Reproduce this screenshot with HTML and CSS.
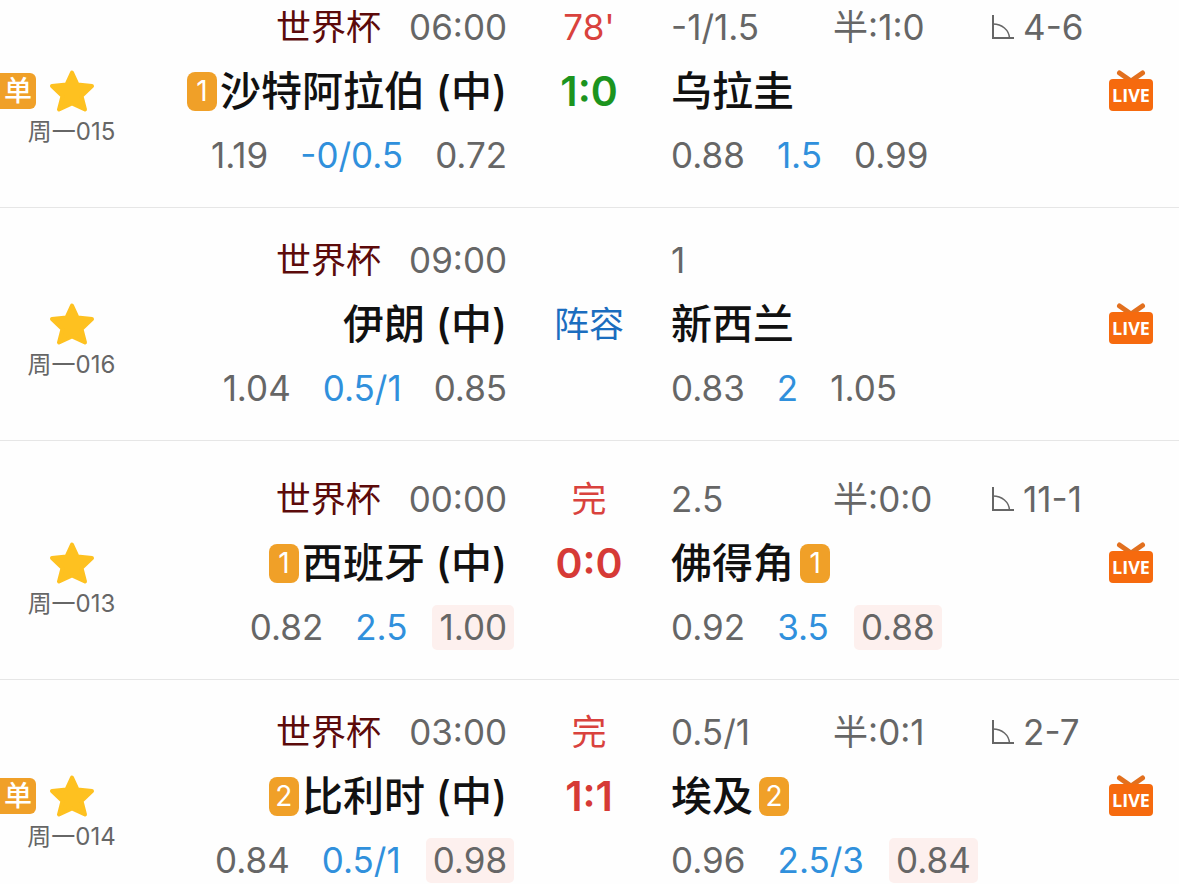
FILE: index.html
```html
<!DOCTYPE html>
<html lang="zh-CN">

<head>
  <meta charset="UTF-8">
  <meta name="viewport" content="width=device-width, initial-scale=1.0">
  <title>世界杯比分</title>
  <link rel="stylesheet" href="styles.css">
</head>

<body>
  <!-- 公用图标 -->
  <svg class="sprite" aria-hidden="true">
    <symbol id="star" viewBox="0 0 46 44">
      <path d="M23 3.500 L28.500 15.500 L43 17 L32.500 27 L36 40.500 L23 34.500 L10 40.500 L13.500 27 L3 17 L17.500 15.500 Z" fill="#fec120" stroke="#fec120" stroke-width="4" stroke-linejoin="round" />
    </symbol>
    <symbol id="corner" viewBox="0 0 24 26">
      <path d="M2 1 V24 H23" fill="none" stroke="#666" stroke-width="2" />
      <path d="M2 10 C11 10 18 16 18.500 24" fill="none" stroke="#666" stroke-width="1.500" />
    </symbol>
    <symbol id="live" viewBox="0 0 46 42">
      <path d="M11.500 3 L23 11 L34.500 3" fill="none" stroke="#e2701f" stroke-width="5" stroke-linecap="round" />
      <rect x="1" y="9" width="44" height="32" rx="4" fill="#f66a0e" />
      <text x="23" y="32" text-anchor="middle" class="live-text">LIVE</text>
    </symbol>
  </svg>

  <main class="list">
    <!-- 沙特阿拉伯 vs 乌拉圭 -->
    <article class="match">
      <div class="mark">
        <div class="mark-line">
          <span class="single">单</span>
          <button class="star" type="button" aria-label="取消关注"><svg><use href="#star" /></svg></button>
        </div>
        <span class="no">周一015</span>
      </div>
      <div class="home">
        <div class="line info"><span class="league">世界杯</span><time>06:00</time></div>
        <div class="line team"><span class="rank">1</span><span class="name">沙特阿拉伯 (中)</span></div>
        <div class="line odds"><span>1.19</span><span class="handicap">-0/0.5</span><span>0.72</span></div>
      </div>
      <div class="state">
        <div class="line minute">78'</div>
        <div class="line score playing">1:0</div>
      </div>
      <div class="away">
        <div class="line detail"><span>-1/1.5</span><span>半:1:0</span><span class="corner"><svg><use href="#corner" /></svg>4-6</span></div>
        <div class="line team"><span class="name">乌拉圭</span></div>
        <div class="line odds"><span>0.88</span><span class="handicap">1.5</span><span>0.99</span></div>
      </div>
      <a class="live" href="#" aria-label="直播"><svg><use href="#live" /></svg></a>
    </article>

    <!-- 伊朗 vs 新西兰 -->
    <article class="match">
      <div class="mark">
        <div class="mark-line">
          <button class="star" type="button" aria-label="取消关注"><svg><use href="#star" /></svg></button>
        </div>
        <span class="no">周一016</span>
      </div>
      <div class="home">
        <div class="line info"><span class="league">世界杯</span><time>09:00</time></div>
        <div class="line team"><span class="name">伊朗 (中)</span></div>
        <div class="line odds"><span>1.04</span><span class="handicap">0.5/1</span><span>0.85</span></div>
      </div>
      <div class="state">
        <div class="line"></div>
        <div class="line"><a class="lineup" href="#">阵容</a></div>
      </div>
      <div class="away">
        <div class="line detail"><span>1</span></div>
        <div class="line team"><span class="name">新西兰</span></div>
        <div class="line odds"><span>0.83</span><span class="handicap">2</span><span>1.05</span></div>
      </div>
      <a class="live" href="#" aria-label="直播"><svg><use href="#live" /></svg></a>
    </article>

    <!-- 西班牙 vs 佛得角 -->
    <article class="match finished">
      <div class="mark">
        <div class="mark-line">
          <button class="star" type="button" aria-label="取消关注"><svg><use href="#star" /></svg></button>
        </div>
        <span class="no">周一013</span>
      </div>
      <div class="home">
        <div class="line info"><span class="league">世界杯</span><time>00:00</time></div>
        <div class="line team"><span class="rank">1</span><span class="name">西班牙 (中)</span></div>
        <div class="line odds"><span>0.82</span><span class="handicap">2.5</span><span class="hit">1.00</span></div>
      </div>
      <div class="state">
        <div class="line minute">完</div>
        <div class="line score">0:0</div>
      </div>
      <div class="away">
        <div class="line detail"><span>2.5</span><span>半:0:0</span><span class="corner"><svg><use href="#corner" /></svg>11-1</span></div>
        <div class="line team"><span class="name">佛得角</span><span class="rank">1</span></div>
        <div class="line odds"><span>0.92</span><span class="handicap">3.5</span><span class="hit">0.88</span></div>
      </div>
      <a class="live" href="#" aria-label="直播"><svg><use href="#live" /></svg></a>
    </article>

    <!-- 比利时 vs 埃及 -->
    <article class="match">
      <div class="mark">
        <div class="mark-line">
          <span class="single">单</span>
          <button class="star" type="button" aria-label="取消关注"><svg><use href="#star" /></svg></button>
        </div>
        <span class="no">周一014</span>
      </div>
      <div class="home">
        <div class="line info"><span class="league">世界杯</span><time>03:00</time></div>
        <div class="line team"><span class="rank">2</span><span class="name">比利时 (中)</span></div>
        <div class="line odds"><span>0.84</span><span class="handicap">0.5/1</span><span class="hit">0.98</span></div>
      </div>
      <div class="state">
        <div class="line minute">完</div>
        <div class="line score">1:1</div>
      </div>
      <div class="away">
        <div class="line detail"><span>0.5/1</span><span>半:0:1</span><span class="corner"><svg><use href="#corner" /></svg>2-7</span></div>
        <div class="line team"><span class="name">埃及</span><span class="rank">2</span></div>
        <div class="line odds"><span>0.96</span><span class="handicap">2.5/3</span><span class="hit">0.84</span></div>
      </div>
      <a class="live" href="#" aria-label="直播"><svg><use href="#live" /></svg></a>
    </article>
  </main>
</body>

</html>
```

FILE: styles.css
```css
* {
  padding: 0;
  margin: 0;
  box-sizing: border-box;
}

body {
  font-family: Inter, "Noto Sans CJK SC", sans-serif;
  font-size: 35px;
  color: #666;
  background: #fefefe;
}

a {
  text-decoration: none;
}

svg {
  display: block;
}

.sprite {
  display: none;
}

/* 比赛行 */
.match {
  display: grid;
  grid-template-columns: 143px minmax(0, 5fr) 164px minmax(0, 6fr) 71px;
  padding: 28px 0;
  border-bottom: 1px solid #e6e6e6;
}

.match:first-child {
  padding-top: 3px;
}

.match:last-child {
  padding-bottom: 0;
  border-bottom: 0;
}

.finished {
  padding-top: 34px;
}

.home,
.state,
.away {
  display: flex;
  flex-direction: column;
  gap: 16px;
}

.line {
  display: flex;
  align-items: center;
  height: 48px;
  line-height: 48px;
  white-space: nowrap;
}

.home .line {
  justify-content: flex-end;
}

.state .line {
  justify-content: center;
}

/* 关注 */
.mark {
  padding-top: 64px;
  text-align: center;
}

.mark-line {
  display: grid;
  grid-template-columns: 1fr auto 1fr;
  align-items: center;
  height: 48px;
}

.single {
  grid-column: 1;
  justify-self: start;
  width: 36px;
  height: 36px;
  border-radius: 0 6px 6px 0;
  font-size: 28px;
  font-weight: 500;
  line-height: 36px;
  text-align: center;
  color: #fff;
  background: #f0a028;
}

.star {
  grid-column: 2;
  border: 0;
  background: none;
  cursor: pointer;
}

.star svg {
  width: 46px;
  height: 44px;
}

.no {
  display: block;
  font-size: 24px;
  line-height: 34px;
}

/* 球队 */
.info {
  gap: 28px;
}

.league {
  color: #5c0a0a;
}

.team {
  gap: 3px;
}

.away .team {
  gap: 6px;
}

.name {
  font-size: 41px;
  font-weight: 500;
  color: #111;
}

.rank {
  width: 30px;
  height: 39px;
  border-radius: 8px;
  font-size: 28px;
  line-height: 39px;
  text-align: center;
  color: #fff;
  background: #f0a028;
}

.odds {
  gap: 32px;
}

.handicap {
  color: #3090dc;
}

.hit {
  height: 45px;
  margin: 0 -7px;
  padding: 0 7px;
  border-radius: 5px;
  line-height: 45px;
  background: #fdf0ee;
}

/* 比分 */
.minute {
  color: #d9423d;
}

.score {
  font-size: 41px;
  font-weight: 600;
  color: #d63a36;
}

.playing {
  color: #1c941e;
}

.lineup {
  color: #1b6dbf;
}

.detail {
  display: grid;
  grid-template-columns: 162px 158px auto;
  justify-content: start;
}

.corner {
  display: flex;
  align-items: center;
  gap: 8px;
}

.corner svg {
  width: 24px;
  height: 26px;
}

/* 直播 */
.live {
  align-self: start;
  padding-top: 67px;
}

.live svg {
  width: 46px;
  height: 42px;
}

.live-text {
  font-family: "Open Sans", sans-serif;
  font-size: 18px;
  font-weight: 700;
  fill: #fff;
}
```
